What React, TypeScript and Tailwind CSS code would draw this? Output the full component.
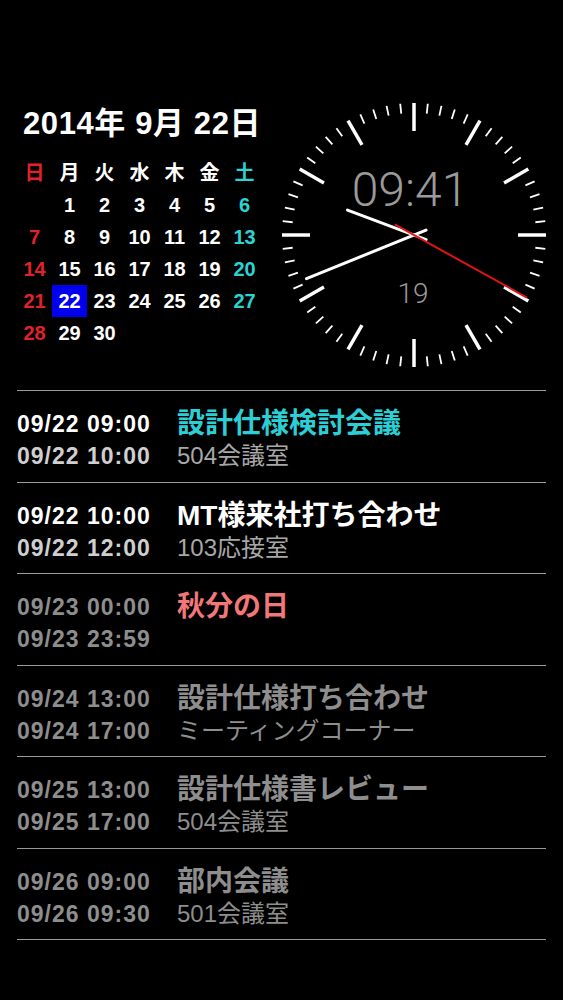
import React from 'react';

const FONT = "font-['Liberation_Sans','Noto_Sans_CJK_JP',sans-serif]";

const weekdays = ['日', '月', '火', '水', '木', '金', '土'];

const weeks: (number | null)[][] = [
  [null, 1, 2, 3, 4, 5, 6],
  [7, 8, 9, 10, 11, 12, 13],
  [14, 15, 16, 17, 18, 19, 20],
  [21, 22, 23, 24, 25, 26, 27],
  [28, 29, 30, null, null, null, null],
];

type Event = {
  start: string;
  end: string;
  title: string;
  place?: string;
  startColor: string;
  endColor: string;
  titleColor: string;
  placeColor: string;
};

const events: Event[] = [
  {
    start: '09/22 09:00',
    end: '09/22 10:00',
    title: '設計仕様検討会議',
    place: '504会議室',
    startColor: 'text-white',
    endColor: 'text-[#cfcfcf]',
    titleColor: 'text-[#2ccfd6]',
    placeColor: 'text-[#a8a8a8]',
  },
  {
    start: '09/22 10:00',
    end: '09/22 12:00',
    title: 'MT様来社打ち合わせ',
    place: '103応接室',
    startColor: 'text-white',
    endColor: 'text-[#cfcfcf]',
    titleColor: 'text-white',
    placeColor: 'text-[#a8a8a8]',
  },
  {
    start: '09/23 00:00',
    end: '09/23 23:59',
    title: '秋分の日',
    startColor: 'text-[#8e8e8e]',
    endColor: 'text-[#8e8e8e]',
    titleColor: 'text-[#f07878]',
    placeColor: 'text-[#8e8e8e]',
  },
  {
    start: '09/24 13:00',
    end: '09/24 17:00',
    title: '設計仕様打ち合わせ',
    place: 'ミーティングコーナー',
    startColor: 'text-[#8e8e8e]',
    endColor: 'text-[#8e8e8e]',
    titleColor: 'text-[#8e8e8e]',
    placeColor: 'text-[#8e8e8e]',
  },
  {
    start: '09/25 13:00',
    end: '09/25 17:00',
    title: '設計仕様書レビュー',
    place: '504会議室',
    startColor: 'text-[#8e8e8e]',
    endColor: 'text-[#8e8e8e]',
    titleColor: 'text-[#8e8e8e]',
    placeColor: 'text-[#8e8e8e]',
  },
  {
    start: '09/26 09:00',
    end: '09/26 09:30',
    title: '部内会議',
    place: '501会議室',
    startColor: 'text-[#8e8e8e]',
    endColor: 'text-[#8e8e8e]',
    titleColor: 'text-[#8e8e8e]',
    placeColor: 'text-[#8e8e8e]',
  },
];

function colColor(i: number) {
  if (i === 0) return 'text-[#e0222a]';
  if (i === 6) return 'text-[#2cd3d3]';
  return 'text-white';
}

function Clock() {
  const c = 135;
  const ticks = Array.from({ length: 60 }, (_, i) => {
    const a = (i * 6 * Math.PI) / 180;
    const hour = i % 5 === 0;
    const r1 = hour ? 104 : 122;
    const r2 = 132;
    return {
      x1: c + r1 * Math.sin(a),
      y1: c - r1 * Math.cos(a),
      x2: c + r2 * Math.sin(a),
      y2: c - r2 * Math.cos(a),
      hour,
    };
  });

  // hand: angle in degrees from 12, length, tail
  const hand = (deg: number, len: number, tail: number) => {
    const a = (deg * Math.PI) / 180;
    const dx = Math.sin(a);
    const dy = -Math.cos(a);
    return {
      x1: c - tail * dx,
      y1: c - tail * dy,
      x2: c + len * dx,
      y2: c + len * dy,
    };
  };

  const h = hand(290.5, 71, 13);
  const m = hand(247.9, 116, 13);
  const s = hand(119, 129, 22);

  return (
    <svg width="270" height="270" viewBox="0 0 270 270">
      {ticks.map((t, i) => (
        <line
          key={i}
          x1={t.x1}
          y1={t.y1}
          x2={t.x2}
          y2={t.y2}
          stroke="#ffffff"
          strokeWidth={t.hour ? 3.5 : 1.8}
        />
      ))}
      <text
        x="131"
        y="106"
        textAnchor="middle"
        fill="#9a9a9a"
        fontSize="48"
        fontWeight="300"
        fontFamily="Roboto, 'Liberation Sans', sans-serif"
      >
        09:41
      </text>
      <text
        x="134"
        y="203"
        textAnchor="middle"
        fill="#9a9a9a"
        fontSize="28"
        fontWeight="300"
        fontFamily="Roboto, 'Liberation Sans', sans-serif"
      >
        19
      </text>
      <line {...h} stroke="#ffffff" strokeWidth="3" strokeLinecap="round" />
      <line {...m} stroke="#ffffff" strokeWidth="3" strokeLinecap="round" />
      <line {...s} stroke="#e01414" strokeWidth="2" />
    </svg>
  );
}

export default function App() {
  return (
    <div className={`w-[563px] h-[1000px] bg-black overflow-hidden ${FONT}`}>
      {/* Top: calendar + clock */}
      <div className="flex pt-[100px]">
        <div className="w-[279px] pt-[6px]">
          <div className="pl-[23px] text-[31px] leading-[36px] font-bold tracking-[0.6px] text-white whitespace-pre">
            2014年 9月 22日
          </div>
          <div className="mt-[15px] ml-[17px] grid grid-cols-[repeat(7,35px)]">
            {weekdays.map((d, i) => (
              <div
                key={d}
                className={`h-[32px] flex items-center justify-center text-[20px] font-bold ${colColor(i)}`}
              >
                {d}
              </div>
            ))}
            {weeks.flat().map((d, i) => (
              <div
                key={i}
                className={`h-[32px] flex items-center justify-center text-[20px] font-bold ${
                  d === 22 ? 'bg-[#0000ee] text-white' : colColor(i % 7)
                }`}
              >
                {d ?? ''}
              </div>
            ))}
          </div>
        </div>
        <Clock />
      </div>

      {/* Schedule list */}
      <div className="mt-[20px] mx-[17px] border-b border-[#9a9a9a]">
        {events.map((e) => (
          <div
            key={e.start}
            className="h-[91.5px] border-t border-[#9a9a9a] pt-[17px] flex"
          >
            <div className="w-[160px] font-bold text-[23px] tracking-[1px]">
              <div className={`h-[32px] leading-[32px] ${e.startColor}`}>{e.start}</div>
              <div className={`h-[32px] leading-[32px] ${e.endColor}`}>{e.end}</div>
            </div>
            <div>
              <div className={`h-[32px] leading-[32px] text-[28px] font-bold whitespace-nowrap ${e.titleColor}`}>
                {e.title}
              </div>
              {e.place && (
                <div className={`h-[32px] leading-[32px] text-[24px] whitespace-nowrap ${e.placeColor}`}>
                  {e.place}
                </div>
              )}
            </div>
          </div>
        ))}
      </div>
    </div>
  );
}
